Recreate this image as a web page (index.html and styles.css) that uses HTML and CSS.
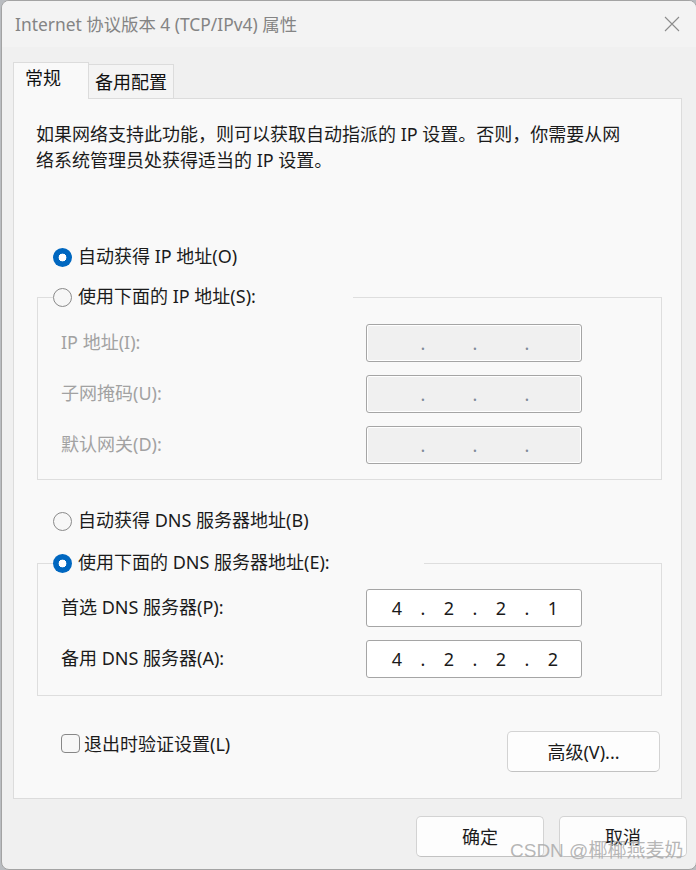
FILE: index.html
```html
<!DOCTYPE html>
<html lang="zh-CN">
<head>
<meta charset="utf-8">
<title>Internet 协议版本 4 (TCP/IPv4) 属性</title>
<link rel="stylesheet" href="styles.css">
</head>
<body>
<div class="window">
  <div class="titlebar">
    <div class="title">Internet 协议版本 4 (TCP/IPv4) 属性</div>
    <div class="close">
      <svg width="16" height="16" viewBox="0 0 16 16"><path d="M1 1 L15 15 M15 1 L1 15" stroke="#8c8c8c" stroke-width="1.1" fill="none"/></svg>
    </div>
  </div>

  <div class="tabs">
    <div class="tab active">常规</div>
    <div class="tab">备用配置</div>
  </div>

  <div class="panel">
    <p class="desc">如果网络支持此功能，则可以获取自动指派的 IP 设置。否则，你需要从网<br>络系统管理员处获得适当的 IP 设置。</p>

    <div class="option opt-auto-ip"><span class="radio checked"></span><span>自动获得 IP 地址(O)</span></div>

    <fieldset class="group group-ip">
      <legend class="option legend-ip"><span class="radio"></span><span>使用下面的 IP 地址(S):</span></legend>
      <div class="rows">
        <div class="lbl disabled">IP 地址(I):</div>
        <div class="ipbox off"><span class="seg"></span><span class="dot">.</span><span class="seg"></span><span class="dot">.</span><span class="seg"></span><span class="dot">.</span><span class="seg"></span></div>
        <div class="lbl disabled">子网掩码(U):</div>
        <div class="ipbox off"><span class="seg"></span><span class="dot">.</span><span class="seg"></span><span class="dot">.</span><span class="seg"></span><span class="dot">.</span><span class="seg"></span></div>
        <div class="lbl disabled">默认网关(D):</div>
        <div class="ipbox off"><span class="seg"></span><span class="dot">.</span><span class="seg"></span><span class="dot">.</span><span class="seg"></span><span class="dot">.</span><span class="seg"></span></div>
      </div>
    </fieldset>

    <div class="option opt-auto-dns"><span class="radio"></span><span>自动获得 DNS 服务器地址(B)</span></div>

    <fieldset class="group group-dns">
      <legend class="option legend-dns"><span class="radio checked"></span><span>使用下面的 DNS 服务器地址(E):</span></legend>
      <div class="rows">
        <div class="lbl">首选 DNS 服务器(P):</div>
        <div class="ipbox"><span class="seg">4</span><span class="dot">.</span><span class="seg">2</span><span class="dot">.</span><span class="seg">2</span><span class="dot">.</span><span class="seg">1</span></div>
        <div class="lbl">备用 DNS 服务器(A):</div>
        <div class="ipbox"><span class="seg">4</span><span class="dot">.</span><span class="seg">2</span><span class="dot">.</span><span class="seg">2</span><span class="dot">.</span><span class="seg">2</span></div>
      </div>
    </fieldset>

    <div class="bottom-row">
      <div class="check"><span class="checkbox"></span><span>退出时验证设置(L)</span></div>
      <button class="btn btn-adv">高级(V)...</button>
    </div>
  </div>

  <div class="actions">
    <button class="btn btn-main">确定</button>
    <button class="btn btn-main">取消</button>
  </div>

  <div class="watermark">CSDN @椰椰燕麦奶</div>
</div>
</body>
</html>
```

FILE: styles.css
```css
* { box-sizing: border-box; }

html, body {
  margin: 0;
  padding: 0;
}

body {
  width: 696px;
  height: 870px;
  overflow: hidden;
  background: #b9bcc0;
  font-family: "Noto Sans", "Noto Sans CJK SC", sans-serif;
  font-size: 18px;
  color: #1b1b1b;
}

.window {
  position: relative;
  margin-left: 1px;
  width: 696px;
  height: 870px;
  background: #f0f0f0;
  border: 1px solid #a3a3a3;
  border-radius: 8px;
  overflow: hidden;
}

.titlebar {
  height: 46px;
  background: #f3f3f3;
  display: flex;
  align-items: center;
  justify-content: space-between;
  padding-left: 13px;
}

.title {
  color: #848484;
  font-size: 17.4px;
  line-height: 26px;
  white-space: nowrap;
}

.close {
  width: 46px;
  height: 46px;
  display: flex;
  align-items: center;
  justify-content: center;
  margin-right: 1px;
}

.tabs {
  display: flex;
  align-items: flex-end;
  margin-top: 15px;
  margin-left: 11px;
  margin-bottom: -1px;
  height: 37px;
}

.tab {
  border: 1px solid #dcdcdc;
  border-bottom: none;
  line-height: 26px;
  white-space: nowrap;
  color: #111;
}

.tab.active {
  position: relative;
  z-index: 1;
  width: 76px;
  height: 37px;
  background: #f9f9f9;
  padding: 2px 0 0 11px;
}

.tab:not(.active) {
  width: 86px;
  height: 34px;
  margin-left: -1px;
  margin-bottom: 1px;
  background: #f4f4f4;
  padding: 4px 0 0 6px;
  border-left-color: #dcdcdc;
}

.panel {
  margin-left: 11px;
  width: 669px;
  height: 701px;
  background: #f9f9f9;
  border: 1px solid #dcdcdc;
  padding: 0 21px 0 23px;
}

.desc {
  margin: 22px 0 0 -1px;
  line-height: 26px;
  white-space: nowrap;
}

.option {
  display: flex;
  align-items: center;
  gap: 6px;
  height: 26px;
  line-height: 26px;
  white-space: nowrap;
}

.option > span:last-child {
  margin-top: -2px;
}

.opt-auto-ip {
  margin: 71px 0 0 16px;
}

.opt-auto-dns {
  margin: 28px 0 0 16px;
}

.radio {
  flex: none;
  width: 19px;
  height: 19px;
  border-radius: 50%;
  border: 1px solid #8a8a8a;
  background: #f7f7f7;
}

.radio.checked {
  border: none;
  background: radial-gradient(circle, #ffffff 0 3.6px, #0067c0 4.2px);
}

.group {
  width: 625px;
  margin: 0;
  border: 1px solid #dedede;
  padding: 0 0 15px 0;
  min-width: 0;
}

.group-ip {
  margin-top: 14px;
  padding-top: 14px;
}

.group-dns {
  margin-top: 16px;
  padding-top: 13px;
  padding-bottom: 17px;
}

.group legend {
  padding: 0;
  margin-left: 15px;
}

.legend-ip { width: 300px; }
.legend-dns { width: 371px; }

.rows {
  display: grid;
  grid-template-columns: 305px 216px;
  grid-auto-rows: 38px;
  row-gap: 13px;
  margin-left: 23px;
  align-items: center;
}

.lbl {
  line-height: 26px;
  white-space: nowrap;
  margin-top: -2px;
}

.lbl.disabled {
  color: #a2a2a2;
}

.ipbox {
  height: 38px;
  display: flex;
  align-items: center;
  padding-left: 8px;
  background: #ffffff;
  border: 1px solid #a5a5a5;
  border-radius: 3px;
  box-shadow: inset 0 0 0 1px #ffffff;
  line-height: 26px;
  font-size: 18px;
  color: #1a1a1a;
}

.ipbox.off {
  background: #f0f0f0;
  color: #7f8a99;
}

.seg {
  width: 44px;
  text-align: center;
}

.dot {
  width: 8px;
  text-align: center;
}

.bottom-row {
  margin-top: 35px;
  display: flex;
  justify-content: space-between;
  align-items: flex-start;
}

.check {
  display: flex;
  align-items: flex-start;
  gap: 4px;
  margin-left: 24px;
  line-height: 26px;
  white-space: nowrap;
}

.checkbox {
  flex: none;
  width: 19px;
  height: 19px;
  margin-top: 3px;
  border: 1px solid #878787;
  border-radius: 4px;
  background: #f7f7f7;
}

.btn {
  font-family: "Noto Sans", "Noto Sans CJK SC", sans-serif;
  font-size: 18px;
  color: #1b1b1b;
  background: #fdfdfd;
  border: 1px solid #d3d3d3;
  border-bottom-color: #c2c2c2;
  border-radius: 5px;
  padding: 0;
  line-height: 26px;
}

.btn-adv {
  width: 153px;
  height: 41px;
}

.actions {
  display: flex;
  justify-content: flex-end;
  gap: 15px;
  margin-top: 17px;
  padding-right: 9px;
}

.btn-main {
  width: 128px;
  height: 41px;
}

.watermark {
  position: absolute;
  left: 508px;
  top: 836px;
  font-size: 19px;
  line-height: 28px;
  color: rgba(170, 170, 170, 0.85);
  white-space: nowrap;
  font-family: "Liberation Sans", "Noto Sans CJK SC", sans-serif;
}
```
